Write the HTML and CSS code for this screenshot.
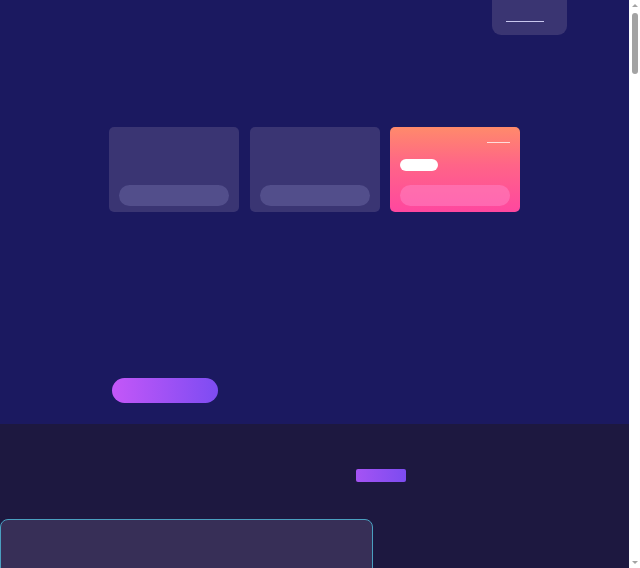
FILE: index.html
```html
<!DOCTYPE html>
<html lang="en">
<head>
<meta charset="utf-8">
<title>Page</title>
<link rel="stylesheet" href="styles.css">
</head>
<body>
<section class="hero">
  <div class="topbar">
    <div class="tab"><span class="tab-line"></span></div>
  </div>
  <div class="cards">
    <div class="card"><span class="card-pill"></span></div>
    <div class="card"><span class="card-pill"></span></div>
    <div class="card card-hot">
      <span class="hot-line"></span>
      <span class="hot-chip"></span>
      <span class="card-pill hot-pill"></span>
    </div>
  </div>
  <div class="cta-row"><span class="cta"></span></div>
</section>
<section class="lower">
  <div class="badge-row"><span class="badge"></span></div>
  <div class="panel"></div>
</section>
<div class="fake-scroll" aria-hidden="true">
  <span class="arrow arrow-up"></span>
  <span class="thumb"></span>
  <span class="arrow arrow-down"></span>
</div>
</body>
</html>
```
FILE: styles.css
```css
html, body {
  margin: 0;
  padding: 0;
}
body {
  background: #1d1840;
  font-family: "Liberation Sans", Arial, sans-serif;
}
.hero {
  background: #1b1960;
  height: 424px;
  display: flex;
  flex-direction: column;
}
.topbar {
  display: flex;
  justify-content: flex-end;
  padding-right: 73px;
}
.tab {
  width: 75px;
  height: 35px;
  background: #3a3572;
  border-radius: 0 0 9px 9px;
  display: flex;
  justify-content: flex-start;
  padding: 21px 0 0 14px;
  box-sizing: border-box;
}
.tab-line {
  width: 38px;
  height: 1px;
  background: #c9c7ee;
}
.cards {
  display: flex;
  gap: 11px;
  padding-left: 109px;
  margin-top: 92px;
}
.card {
  width: 130px;
  height: 85px;
  background: #3a3573;
  border-radius: 5px;
  box-sizing: border-box;
  padding: 0 10px 6px;
  display: flex;
  flex-direction: column;
  justify-content: flex-end;
}
.card-pill {
  display: block;
  height: 21px;
  border-radius: 11px;
  background: #524e8b;
}
.card-hot {
  background: linear-gradient(180deg, #ff8a6b 0%, #ff6488 45%, #ff479f 100%);
  justify-content: flex-start;
  padding-top: 15px;
  margin-left: -1px;
}
.hot-line {
  display: block;
  align-self: flex-end;
  width: 23px;
  height: 1px;
  background: rgba(255, 255, 255, 0.75);
}
.hot-chip {
  display: block;
  width: 38px;
  height: 12px;
  border-radius: 6px;
  background: #ffffff;
  margin-top: 16px;
}
.hot-pill {
  margin-top: 14px;
  background: rgba(255, 130, 195, 0.55);
}
.cta-row {
  padding-left: 112px;
  margin-top: 166px;
}
.cta {
  display: block;
  width: 106px;
  height: 25px;
  border-radius: 13px;
  background: linear-gradient(90deg, #c457f8 0%, #7d4cf2 100%);
}
.lower {
  height: 4576px;
  padding-top: 45px;
  box-sizing: border-box;
}
.badge-row {
  padding-left: 356px;
}
.badge {
  display: block;
  width: 50px;
  height: 13px;
  border-radius: 2px;
  background: linear-gradient(90deg, #a553f4 0%, #7c4cf0 100%);
}
.panel {
  margin-top: 37px;
  width: 373px;
  height: 300px;
  box-sizing: border-box;
  background: #372f57;
  border: 1px solid #4a9fc0;
  border-radius: 8px;
}
.fake-scroll {
  position: fixed;
  top: 0;
  right: 0;
  width: 11px;
  height: 100vh;
  background: #ffffff;
  display: flex;
  flex-direction: column;
  align-items: center;
  padding: 4px 0;
  box-sizing: border-box;
}
.arrow {
  display: block;
  width: 0;
  height: 0;
  border-left: 3px solid transparent;
  border-right: 3px solid transparent;
}
.arrow-up {
  border-bottom: 3px solid #a3a3a3;
}
.arrow-down {
  border-top: 3px solid #a3a3a3;
  margin-top: auto;
}
.thumb {
  display: block;
  width: 6px;
  height: 61px;
  margin-top: 6px;
  border-radius: 3px;
  background: #a3a3a3;
}
```
